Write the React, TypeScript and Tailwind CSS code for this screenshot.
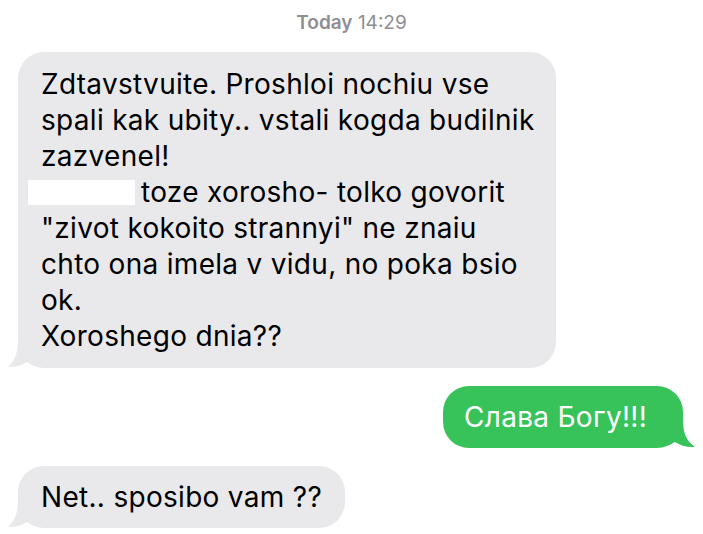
import React from "react";

function LeftTail({ color }: { color: string }) {
  return (
    <svg
      className="absolute left-[-10px] bottom-0"
      width="34"
      height="28"
      viewBox="0 0 34 28"
    >
      <path
        d="M10 0 C10 12 7 21 0 27 C7 27.5 14 25.5 19 22 C22 24 26 25 32 26 L32 0 Z"
        fill={color}
      />
    </svg>
  );
}

function RightTail({ color }: { color: string }) {
  return (
    <svg
      className="absolute right-[-12px] bottom-0"
      width="34"
      height="28"
      viewBox="0 0 34 28"
    >
      <path
        d="M22 0 C22 12 25 21 34 27 C26 27.5 19 25.5 14 22 C11 24 7 25 2 26 L2 0 Z"
        fill={color}
      />
    </svg>
  );
}

export default function App() {
  const font = { fontFamily: "Inter, 'Liberation Sans', sans-serif" };
  return (
    <div
      className="w-[703px] h-[534px] bg-white flex flex-col overflow-hidden"
      style={font}
    >
      <div className="pt-[12px] text-center text-[19px] leading-[22px] text-[#8e8e93]">
        <span className="font-semibold">Today</span> <span>14:29</span>
      </div>

      <div className="mt-[18px] ml-[18px] relative w-[538px]">
        <LeftTail color="#e9e9eb" />
        <div className="relative rounded-[26px] bg-[#e9e9eb] px-[23px] py-[14px] text-[28px] leading-[36px] text-black whitespace-nowrap tracking-[0.3px]">
          Zdtavstvuite. Proshloi nochiu vse
          <br />
          spali kak ubity.. vstali kogda budilnik
          <br />
          zazvenel!
          <br />
          <span className="inline-block w-[107px] h-[25px] bg-white ml-[-13px] mr-[6px] align-[-3px]"></span>
          toze xorosho- tolko govorit
          <br />
          "zivot kokoito strannyi" ne znaiu
          <br />
          chto ona imela v vidu, no poka bsio
          <br />
          ok.
          <br />
          Xoroshego dnia??
        </div>
      </div>

      <div className="mt-[18px] mr-[20px] self-end relative">
        <RightTail color="#37c35a" />
        <div className="relative rounded-[26px] bg-[#37c35a] pl-[21px] pr-[36px] py-[13px] text-[28px] leading-[36px] text-white whitespace-nowrap tracking-[0.3px]">
          Слава Богу!!!
        </div>
      </div>

      <div className="mt-[18px] ml-[18px] self-start relative">
        <LeftTail color="#e9e9eb" />
        <div className="relative rounded-[26px] bg-[#e9e9eb] px-[23px] py-[13px] text-[28px] leading-[36px] text-black whitespace-nowrap tracking-[0.3px]">
          Net.. sposibo vam ??
        </div>
      </div>
    </div>
  );
}
